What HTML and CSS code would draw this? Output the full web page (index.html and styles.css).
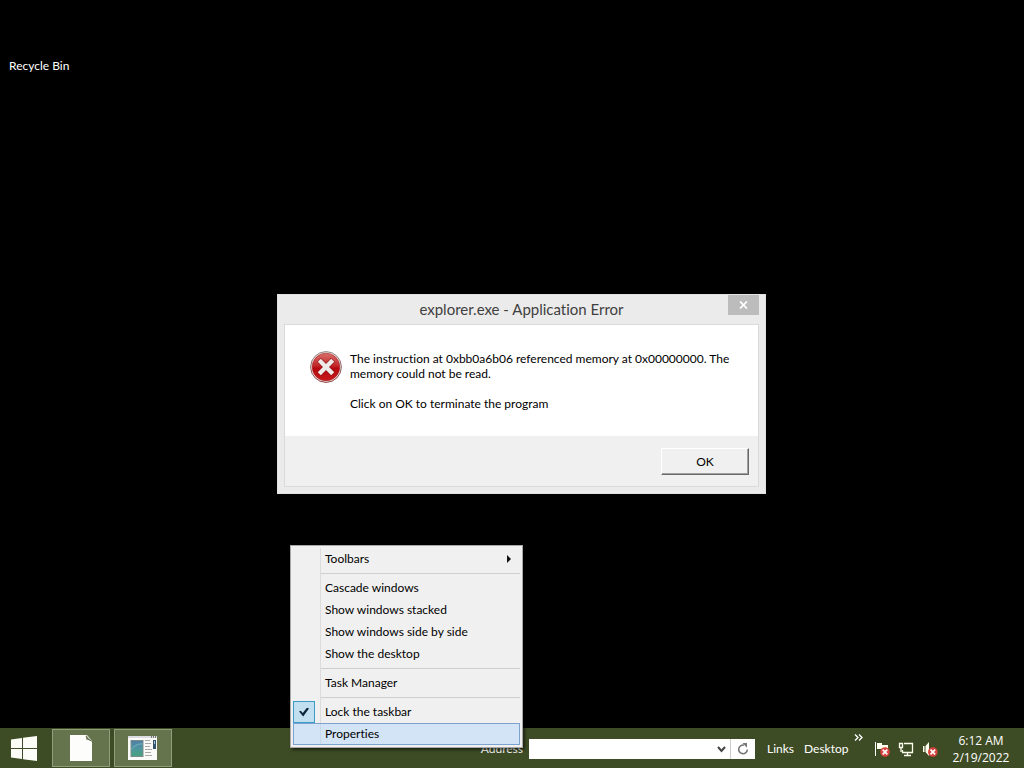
FILE: index.html
```html
<!DOCTYPE html>
<html lang="en">
<head>
<meta charset="utf-8">
<meta name="viewport" content="width=device-width, initial-scale=1">
<title>Desktop</title>
<link rel="stylesheet" href="styles.css">
</head>
<body>
<main class="desktop">
  <a class="desktop-icon" href="#recycle-bin">Recycle Bin</a>

  <section class="dialog" role="alertdialog" aria-labelledby="dialog-title" aria-describedby="dialog-text">
    <header class="dialog-titlebar">
      <h1 class="dialog-title" id="dialog-title">explorer.exe - Application Error</h1>
      <button class="dialog-close" type="button" aria-label="Close">
        <svg width="9" height="8" viewBox="0 0 9 8"><path d="M1 .5 8 7.5M8 .5 1 7.5" stroke="#fff" stroke-width="1.7"/></svg>
      </button>
    </header>
    <div class="dialog-frame">
      <div class="dialog-body">
        <svg class="dialog-icon" width="32" height="32" viewBox="0 0 32 32" aria-hidden="true">
          <defs>
            <linearGradient id="red" x1="0" y1="0" x2="0" y2="1"><stop offset="0" stop-color="#d8706c"/><stop offset=".45" stop-color="#c3282a"/><stop offset=".55" stop-color="#b4090f"/><stop offset="1" stop-color="#c81a1c"/></linearGradient>
            <linearGradient id="rim" x1="0" y1="0" x2="0" y2="1"><stop offset="0" stop-color="#8e8886"/><stop offset="1" stop-color="#8a4442"/></linearGradient>
          </defs>
          <circle cx="16" cy="16" r="15.4" fill="#f1e4e2" stroke="url(#rim)"/>
          <circle cx="16" cy="16" r="13.8" fill="url(#red)" stroke="#a51a1c" stroke-width=".6"/>
          <path d="M9 9 23 23M23 9 9 23" stroke="#8f1013" stroke-width="5.6"/>
          <path d="M9.3 9.3 22.7 22.7M22.7 9.3 9.3 22.7" stroke="#eeebe8" stroke-width="4.4"/>
        </svg>
        <div class="dialog-text" id="dialog-text">
          <p>The instruction at 0xbb0a6b06 referenced memory at 0x00000000. The<br>memory could not be read.</p>
          <p>Click on OK to terminate the program</p>
        </div>
      </div>
      <footer class="dialog-footer"><button class="dialog-button" type="button">OK</button></footer>
    </div>
  </section>

  <div class="menu" role="menu">
    <button class="menu-item" type="button" role="menuitem">Toolbars
      <svg class="menu-arrow" width="4" height="8" viewBox="0 0 4 8"><path d="M0 0 4 4 0 8Z" fill="#111"/></svg>
    </button>
    <hr class="menu-line">
    <button class="menu-item" type="button" role="menuitem">Cascade windows</button>
    <button class="menu-item" type="button" role="menuitem">Show windows stacked</button>
    <button class="menu-item" type="button" role="menuitem">Show windows side by side</button>
    <button class="menu-item" type="button" role="menuitem">Show the desktop</button>
    <hr class="menu-line">
    <button class="menu-item" type="button" role="menuitem">Task Manager</button>
    <hr class="menu-line">
    <label class="menu-item menu-item-check"><input class="menu-check" type="checkbox" checked>Lock the taskbar</label>
    <button class="menu-item menu-item-active" type="button" role="menuitem">Properties</button>
  </div>
</main>

<footer class="taskbar">
  <button class="start" type="button" aria-label="Start">
    <svg width="26" height="25" viewBox="0 0 26 25" fill="#fdfdf8"><path d="M0 3.6 11 2v10H0ZM12 1.8 26 0v12H12ZM0 13H11V23L0 21.4ZM12 13H26V25L12 23.2Z"/></svg>
  </button>
  <div class="tasks">
    <button class="task" type="button" aria-label="Document">
      <svg width="24" height="28" viewBox="0 0 24 28"><path d="M1 1H18L23 7V27H1Z" fill="#fdfdfb"/><path d="M17 1 23 7V8Q21 5 17 6Z" fill="#9da38e"/><path d="M17 2Q18 6 22.5 7" fill="none" stroke="#596743"/></svg>
    </button>
    <button class="task" type="button" aria-label="Application">
      <svg width="30" height="25" viewBox="0 0 30 25">
        <defs><linearGradient id="pic" x1="0" y1="0" x2="0" y2="1"><stop offset="0" stop-color="#4f7fa6"/><stop offset=".5" stop-color="#4f95a0"/><stop offset="1" stop-color="#45a47a"/></linearGradient></defs>
        <rect width="29" height="24" fill="#fafaf8"/><rect width="29" height="2" fill="#dcdde0"/>
        <path d="M23 1h1M25 1h1M27 1h1" stroke="#555" stroke-width="1.5"/>
        <rect x="3" y="4.500" width="12" height="16" fill="url(#pic)" stroke="#7c8b8d"/>
        <path d="M3.500 13Q9 7 14.500 8" stroke="#79b3bd" fill="none"/>
        <path d="M17 4.500h5M17 7.500h6M17 10.500h5M17 13.500h7M17 16.500h6M17 19.500h7" stroke="#a8aaa9"/>
        <rect x="25" y="4" width="3" height="9" fill="#36566e"/><path d="M26.500 5v3" stroke="#9cc4cf"/>
      </svg>
    </button>
  </div>
  <form class="address">
    <label class="address-label" for="address">Address</label>
    <div class="address-box">
      <input class="address-input" id="address" type="text">
      <button class="address-button" type="button" aria-label="Show history"><svg width="9" height="7" viewBox="0 0 9 7"><path d="M1 1 4.500 5 8 1" fill="none" stroke="#444" stroke-width="2"/></svg></button>
      <button class="address-button address-refresh" type="button" aria-label="Refresh"><svg width="12" height="12" viewBox="0 0 12 12"><path d="M7 2.200A4.300 4.300 0 1 0 10.300 6.500" fill="none" stroke="#777" stroke-width="1.600"/><path d="M5.500 0H10V4.800Z" fill="#777"/></svg></button>
    </div>
  </form>
  <nav class="links">
    <a class="link" href="#links">Links</a>
    <a class="link" href="#desktop">Desktop</a>
    <button class="more" type="button" aria-label="More"><svg width="9" height="7" viewBox="0 0 9 7"><path d="M1 .5 4 3.500 1 6.500M5 .5 8 3.500 5 6.500" fill="none" stroke="#fff" stroke-width="1.300"/></svg></button>
  </nav>
  <div class="tray">
    <button class="tray-button" type="button" aria-label="Action Center">
      <svg width="16" height="16" viewBox="0 0 16 16"><path d="M1.500 1v14" stroke="#fff"/><path d="M3 2H8V4H14V8H3Z" fill="#fffff0"/><circle cx="11" cy="11" r="4.800" fill="#d7433c"/><path d="M8.700 8.700l4.600 4.600M13.300 8.700l-4.600 4.600" stroke="#fff" stroke-width="1.700"/></svg>
    </button>
    <button class="tray-button" type="button" aria-label="Network">
      <svg width="16" height="16" viewBox="0 0 16 16" fill="none" stroke="#fffff0"><path d="M6 2.500H14.500V11.500H4.500V9M9.500 12v2M6 14.500h7" stroke-width="1.300"/><path d="M1.500 2.500h3v4h-3ZM3 6.500V11" stroke-width="1.300"/></svg>
    </button>
    <button class="tray-button" type="button" aria-label="Volume muted">
      <svg width="16" height="16" viewBox="0 0 16 16"><path d="M1 5H2.500V11H1ZM3.500 5 7 1V15L3.500 11Z" fill="#fffff0"/><circle cx="10.800" cy="11" r="4.800" fill="#d7433c"/><path d="M8.500 8.700l4.600 4.600M13.100 8.700l-4.600 4.600" stroke="#fff" stroke-width="1.700"/></svg>
    </button>
  </div>
  <button class="clock" type="button"><time datetime="2022-02-19T06:12">6:12 AM<br>2/19/2022</time></button>
</footer>
</body>
</html>
```
FILE: styles.css
```css
* { box-sizing: border-box; }

body {
  display: flex;
  flex-direction: column;
  min-height: 100vh;
  margin: 0;
  background: #000;
  color: #000;
  font: 12px/15px Lato, "Open Sans", sans-serif;
  font-variant-ligatures: none;
}

button, input {
  margin: 0;
  padding: 0;
  border: 0;
  background: none;
  color: inherit;
  font: inherit;
}

button { display: flex; align-items: center; justify-content: center; }
svg { display: block; flex: none; }
a { color: #fff; text-decoration: none; }

.desktop { position: relative; flex: 1; padding: 58px 9px; }
.desktop-icon { display: inline-block; }

/* Error dialog */
.dialog {
  position: absolute;
  left: 277px;
  top: 294px;
  width: 489px;
  padding: 0 6px 6px;
  border: 1px solid #e2e2e2;
  background: #ebebeb;
}
.dialog-titlebar { display: flex; height: 29px; align-items: flex-start; }
.dialog-title {
  flex: 1;
  margin: 0;
  padding-left: 31px;
  color: #404040;
  font-size: 15px;
  font-weight: 400;
  line-height: 28px;
  text-align: center;
}
.dialog-close { width: 31px; height: 20px; background: #bcbcbc; }
.dialog-frame { border: 1px solid #dadada; background: #f0f0f0; }
.dialog-body { display: flex; gap: 8px; height: 111px; padding: 26px 25px; background: #fff; }
.dialog-text { white-space: nowrap; }
.dialog-text p { margin: 0 0 15px; }
.dialog-footer { display: flex; justify-content: flex-end; padding: 12px 9px 11px; }
.dialog-button {
  width: 88px;
  height: 27px;
  border: 1px solid;
  border-color: #fff #696969 #696969 #fff;
  box-shadow: inset -1px -1px #a0a0a0;
}

/* Taskbar context menu */
.menu {
  position: absolute;
  z-index: 1;
  left: 290px;
  bottom: -20px;
  width: 233px;
  padding: 2px;
  border: 1px solid #a8a8a8;
  background: linear-gradient(90deg, transparent 27px, #dcdcdc 27px 28px, transparent 28px) content-box, #f0f0f0;
  box-shadow: 2px 2px 3px #0008;
}
.menu-item {
  display: flex;
  align-items: center;
  justify-content: flex-start;
  width: 100%;
  height: 22px;
  padding: 0 9px 1px 32px;
}
.menu-arrow { margin-left: auto; }
.menu-line { height: 1px; margin: 3px 0 3px 28px; border: 0; background: #cfcfcf; }
.menu-item-check { gap: 10px; padding: 0; line-height: 16px; }
.menu-item-active { background: #a8d2ff66; box-shadow: inset 0 0 0 1px #7da2ce; }
.menu-check {
  display: grid;
  place-items: center;
  width: 22px;
  height: 22px;
  border: 1px solid #3c9cc8;
  background: #c2dff0;
  appearance: none;
}
.menu-check:checked::before {
  content: "";
  width: 10px;
  height: 9px;
  background: #10263c;
  clip-path: polygon(0 45%, 18% 35%, 38% 62%, 80% 0, 100% 12%, 42% 100%);
}

/* Taskbar */
.taskbar { display: flex; align-items: center; height: 40px; background: #3e4c25; color: #fff; }
.start { width: 48px; height: 40px; }
.tasks { display: flex; gap: 4px; padding-left: 4px; }
.task { width: 58px; height: 38px; border: 1px solid #929d79; background: #66744d; }
.address { display: flex; align-items: center; gap: 6px; margin-left: auto; }
.address-box { display: flex; height: 20px; margin-top: 2px; background: #fff; }
.address-input { width: 183px; }
.address-button { width: 18px; }
.address-refresh { width: 25px; border-left: 1px solid #ccc; }
.links { display: flex; align-items: center; width: 108px; height: 40px; padding-left: 12px; }
.link { width: 37px; }
.link + .link { width: 50px; }
.more { align-self: flex-start; padding-top: 6px; }
.tray { display: flex; gap: 8px; padding: 2px 14px 0 11px; }
.tray-button { width: 16px; height: 16px; }
.clock { width: 58px; margin: 2px 14px 0 0; font-family: "Open Sans", sans-serif; line-height: 17px; }
```
